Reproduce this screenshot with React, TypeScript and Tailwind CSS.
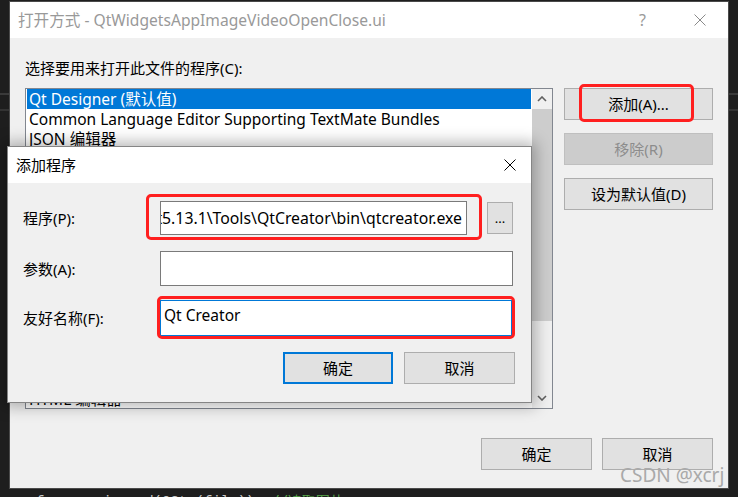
const listItems = [
  'Qt Designer (默认值)',
  'Common Language Editor Supporting TextMate Bundles',
  'JSON 编辑器',
  'Web 窗体编辑器',
  'XML (文本) 编辑器',
  'XML 编辑器',
  '包含编码功能的 XML (文本) 编辑器',
  '源代码(文本)编辑器',
  '包含编码功能的源代码(文本)编辑器',
  'CSS 编辑器',
  '二进制编辑器',
  '资源编辑器',
  'Qt Linguist',
  'Windows 资源管理器',
  '包含编码功能的 HTML 编辑器',
  'HTML 编辑器',
];

const CloseGlyph = ({ color, size }: { color: string; size: number }) => (
  <svg width={size} height={size} viewBox="0 0 12 12">
    <path d="M0.5 0.5 L11.5 11.5 M11.5 0.5 L0.5 11.5" stroke={color} strokeWidth="1" />
  </svg>
);

const Chevron = ({ up }: { up?: boolean }) => (
  <svg width="10" height="6" viewBox="0 0 10 6">
    <path
      d={up ? 'M1 5 L5 1 L9 5' : 'M1 1 L5 5 L9 1'}
      stroke="#606060"
      strokeWidth="1.6"
      fill="none"
    />
  </svg>
);

const Btn = ({
  label,
  className = '',
}: {
  label: string;
  className?: string;
}) => (
  <div
    className={`flex items-center justify-center h-[32px] bg-[#e1e1e1] border border-[#adadad] text-black ${className}`}
  >
    {label}
  </div>
);

export default function App() {
  return (
    <div className="relative w-[738px] h-[497px] overflow-hidden bg-[#1e1e1e] font-['Noto_Sans','Noto_Sans_CJK_SC',sans-serif] text-[15px] leading-[20px]">
      {/* editor lines behind */}
      <div className="absolute left-0 right-0 top-[93px] h-[2px] bg-[#3a3a3a]" />
      <div className="absolute left-0 right-0 top-[109px] h-[2px] bg-[#333333]" />

      {/* main dialog */}
      <div className="relative ml-[9px] mt-[1px] w-[720px] h-[488px] bg-[#f0f0f0] border border-[#4a4a4a] flex flex-col">
        <div className="h-[36px] bg-white flex items-center pl-[8px]">
          <span className="text-[#999999] whitespace-nowrap text-[15.6px]">
            打开方式 - QtWidgetsAppImageVideoOpenClose.ui
          </span>
          <div className="ml-auto flex">
            <div className="w-[57px] flex justify-center text-[#9a9a9a] text-[16px]">?</div>
            <div className="w-[57px] flex justify-center items-center">
              <CloseGlyph color="#8a8a8a" size={12} />
            </div>
          </div>
        </div>

        <div className="flex-1 flex flex-col px-[15px]">
          <div className="flex gap-[11px]">
            <div className="w-[528px]">
              <div className="mt-[20px] h-[20px] text-black whitespace-nowrap">
                选择要用来打开此文件的程序(C):
              </div>
              <div className="mt-[10px] h-[321px] border border-[#828790] bg-white flex">
                <div className="flex-1 overflow-hidden pl-[1px] pr-[1px] text-[15.5px]">
                  {listItems.map((t, i) => (
                    <div
                      key={i}
                      className={`h-[20px] pl-[2px] whitespace-nowrap ${
                        i === 0 ? 'bg-[#0078d7] text-white' : 'text-black'
                      }`}
                    >
                      {t}
                    </div>
                  ))}
                </div>
                <div className="w-[20px] bg-[#f0f0f0] flex flex-col">
                  <div className="h-[20px] flex items-center justify-center">
                    <Chevron up />
                  </div>
                  <div className="h-[212px] bg-[#cdcdcd]" />
                  <div className="flex-1" />
                  <div className="h-[20px] flex items-center justify-center">
                    <Chevron />
                  </div>
                </div>
              </div>
            </div>
            <div className="w-[149px] pt-[50px] flex flex-col gap-[13px]">
              <Btn label="添加(A)..." />
              <div className="flex items-center justify-center h-[32px] bg-[#cccccc] border border-[#bfbfbf] text-[#8c8c8c]">
                移除(R)
              </div>
              <Btn label="设为默认值(D)" />
            </div>
          </div>
          <div className="mt-auto mb-[18px] flex justify-end gap-[10px]">
            <Btn label="确定" className="w-[111px]" />
            <Btn label="取消" className="w-[111px]" />
          </div>
        </div>
      </div>

      {/* editor code line below, only the tops show */}
      <div className="pl-[36px] pt-[5px] whitespace-nowrap font-['Liberation_Mono',monospace] text-[14px] leading-[16px] text-[#c8c8c8]">
        {'frame = imread(QStr(file)), '}
        <span className="text-[#57a64a]">//读取图片</span>
      </div>

      {/* add-program dialog on top */}
      <div className="absolute left-[7px] top-[146px] w-[525px] h-[257px] bg-[#f0f0f0] border border-[#858585] shadow-[0_0_14px_4px_rgba(0,0,0,0.28)] flex flex-col">
        <div className="h-[36px] bg-white flex items-center pl-[8px] pr-[15px]">
          <span className="text-black">添加程序</span>
          <div className="ml-auto">
            <CloseGlyph color="#000000" size={12} />
          </div>
        </div>
        <div className="flex flex-col pl-[15px] pr-[16px]">
          <div className="mt-[18px] flex items-center">
            <div className="w-[137px] text-black">程序(P):</div>
            <div className="w-[307px] h-[34px] bg-white border border-[#7a7a7a] flex items-center justify-end overflow-hidden pr-[4px]">
              <span className="whitespace-nowrap text-black text-[15.8px]">
                D:\Qt\Qt5.13.1\Tools\QtCreator\bin\qtcreator.exe
              </span>
            </div>
            <div className="ml-[20px] w-[26px] h-[32px] bg-[#e1e1e1] border border-[#adadad] flex items-center justify-center text-black text-[13px]">
              ...
            </div>
          </div>
          <div className="mt-[16px] flex items-center">
            <div className="w-[137px] text-black">参数(A):</div>
            <div className="w-[353px] h-[35px] bg-white border border-[#7a7a7a]" />
          </div>
          <div className="mt-[14px] flex items-center">
            <div className="w-[137px] text-black">友好名称(F):</div>
            <div className="w-[352px] h-[36px] bg-white border border-[#0078d7] pl-[3px] pt-[4px] text-black text-[15.5px]">
              Qt Creator
            </div>
          </div>
          <div className="mt-[16px] flex justify-end gap-[11px]">
            <div className="w-[110px] h-[32px] bg-[#e1e1e1] border-2 border-[#0078d7] flex items-center justify-center text-black">
              确定
            </div>
            <Btn label="取消" className="w-[111px]" />
          </div>
        </div>
      </div>

      {/* red annotations */}
      <div className="absolute left-[579px] top-[84px] w-[115px] h-[38px] border-[3px] border-[#ff1f1f] rounded-[5px]" />
      <div className="absolute left-[146px] top-[194px] w-[336px] h-[46px] border-[3px] border-[#ff1f1f] rounded-[5px]" />
      <div className="absolute left-[157px] top-[296px] w-[358px] h-[43px] border-[3px] border-[#ff1f1f] rounded-[5px]" />

      {/* watermark */}
      <div className="absolute left-[620px] top-[463px] text-[19px] leading-[24px] text-[#a9a9a9] whitespace-nowrap">
        CSDN @xcrj
      </div>
    </div>
  );
}
